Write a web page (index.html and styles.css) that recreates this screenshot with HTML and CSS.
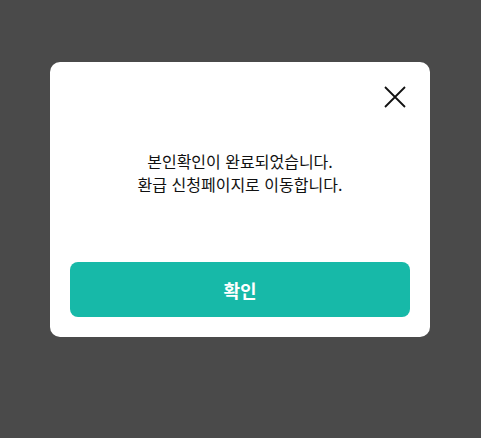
FILE: index.html
```html
<!DOCTYPE html>
<html lang="ko">
<head>
<meta charset="utf-8">
<link rel="stylesheet" href="styles.css">
</head>
<body>
<div class="overlay">
  <div class="modal">
    <div class="modal-header">
      <button class="close" aria-label="닫기">
        <svg width="22" height="22" viewBox="0 0 22 22"><path d="M1 1 L21 21 M21 1 L1 21" stroke="#111" stroke-width="1.8" fill="none"/></svg>
      </button>
    </div>
    <p class="message">본인확인이 완료되었습니다.<br>환급 신청페이지로 이동합니다.</p>
    <button class="confirm">확인</button>
  </div>
</div>
</body>
</html>
```
FILE: styles.css
```css
html, body {
  margin: 0;
  height: 100%;
  background: #4a4a4a;
}
body {
  font-family: "Noto Sans CJK KR", "Noto Sans", sans-serif;
}
.overlay {
  display: flex;
  padding: 62px 0 0 50px;
}
.modal {
  width: 380px;
  box-sizing: border-box;
  background: #fff;
  border-radius: 10px;
  padding: 24px 20px 20px;
  display: flex;
  flex-direction: column;
}
.modal-header {
  display: flex;
  justify-content: flex-end;
  padding-right: 4px;
}
.close {
  width: 22px;
  height: 22px;
  padding: 0;
  border: 0;
  background: none;
  display: block;
}
.close svg { display: block; }
.message {
  margin: 42px 0 0;
  text-align: center;
  font-size: 16px;
  line-height: 23px;
  color: #111;
}
.confirm {
  margin-top: 66px;
  height: 55px;
  border: 0;
  border-radius: 8px;
  background: #17b9a8;
  color: #fff;
  font-family: "Noto Sans CJK KR", sans-serif;
  font-size: 18px;
  font-weight: 700;
}
```
